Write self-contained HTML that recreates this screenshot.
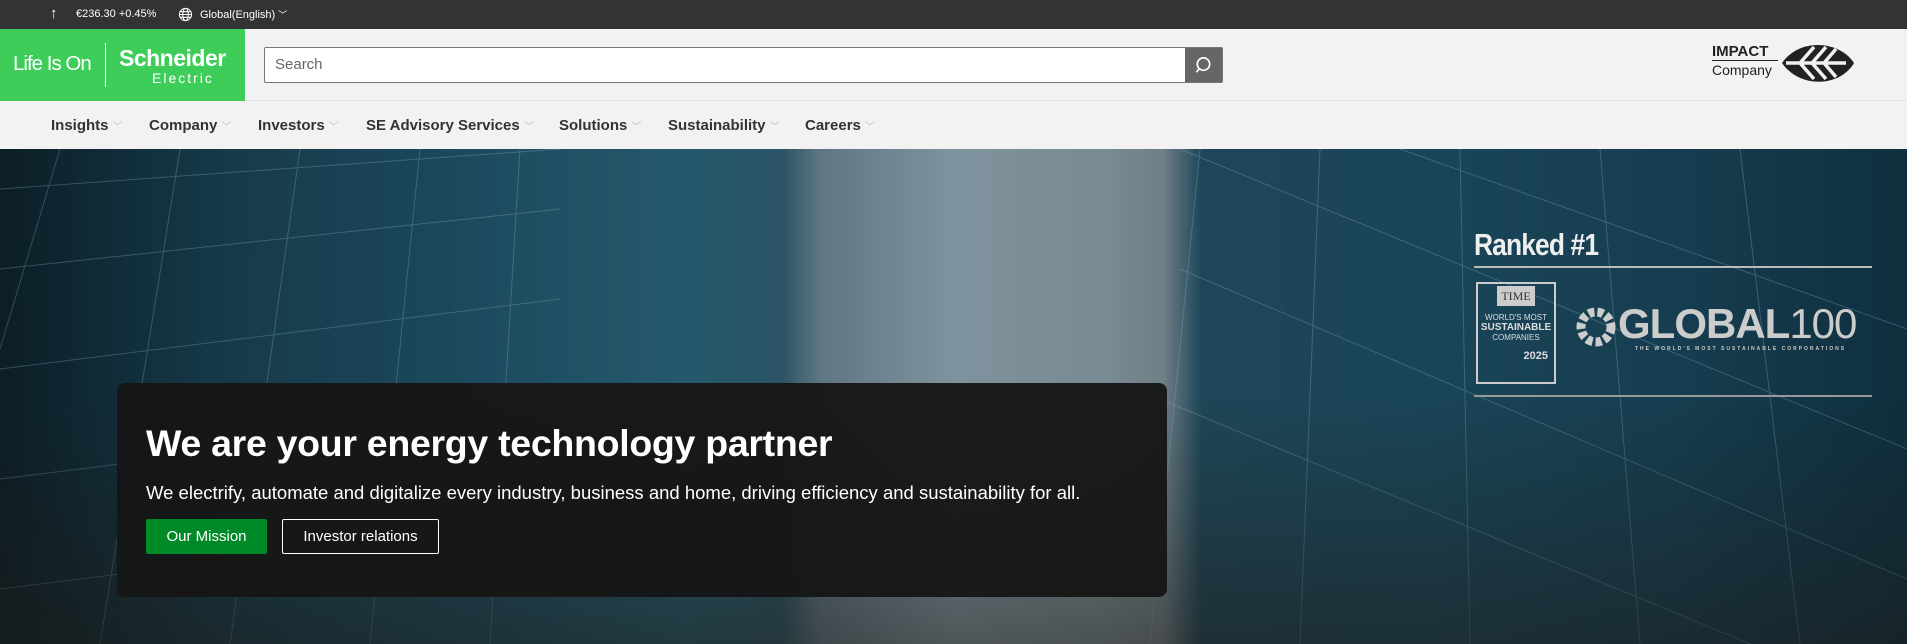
<!DOCTYPE html>
<html><head><meta charset="utf-8"><style>
*{margin:0;padding:0;box-sizing:border-box}
html,body{width:1907px;height:644px;overflow:hidden}
body{font-family:"Liberation Sans",Arial,sans-serif;background:#fff;position:relative}
.top{position:absolute;left:0;top:0;width:1907px;height:29px;background:#333;color:#fff;font-size:11px}
.hdr{position:absolute;left:0;top:29px;width:1907px;height:72px;background:#f2f2f2;border-bottom:1px solid #e2e2e2}
.logo{position:absolute;left:0;top:0;width:245px;height:72px;background:#3dcd58;color:#fff}
.nav{position:absolute;left:0;top:101px;width:1907px;height:48px;background:#f2f2f2}
.nav span{position:absolute;top:16px;font-size:15px;font-weight:bold;color:#333}
.nav span i{font-style:normal;color:#bbb;font-weight:normal;font-size:10px;margin-left:4px}
.hero{position:absolute;left:0;top:149px;width:1907px;height:495px;overflow:hidden;
background:linear-gradient(90deg,#0c1e26 0%,#163a4a 12%,#1d4a5e 25%,#24596b 36%,#2a5466 41%,#5f7682 43%,#7f939e 50%,#788a92 58%,#6f7f86 61%,#1e4658 63%,#1a4558 75%,#163d50 88%,#0f2f3e 100%)}
.hero .shade{position:absolute;inset:0;background:linear-gradient(180deg,rgba(0,0,0,0) 0%,rgba(0,0,0,0) 50%,rgba(30,25,20,.5) 100%)}
.card{position:absolute;left:117px;top:234px;width:1050px;height:214px;background:rgba(22,22,22,.96);border-radius:8px}
</style></head><body>
<div class="top">
 <span style="position:absolute;left:50px;top:5px;font-size:15px">↑</span>
 <span style="position:absolute;left:76px;top:8px">€236.30 +0.45%</span>
 <svg style="position:absolute;left:178px;top:7px" width="15" height="15" viewBox="0 0 16 16" fill="none" stroke="#fff" stroke-width="1.1"><circle cx="8" cy="8" r="6.5"/><ellipse cx="8" cy="8" rx="3" ry="6.5"/><path d="M1.5 8h13M2.5 5h11M2.5 11h11"/></svg>
 <span style="position:absolute;left:200px;top:8px">Global(English) <span style="font-size:9px">﹀</span></span>
</div>
<div class="hdr">
 <div class="logo">
  <span style="position:absolute;left:13px;top:23px;font-size:20.5px;letter-spacing:-1px">Life Is On</span>
  <div style="position:absolute;left:105px;top:14px;width:1px;height:44px;background:#fff"></div>
  <span style="position:absolute;left:119px;top:16px;font-size:23px;font-weight:bold;letter-spacing:-.5px">Schneider</span>
  <span style="position:absolute;left:152px;top:41px;font-size:14px;letter-spacing:2px">Electric</span>
 </div>
 <div style="position:absolute;left:264px;top:18px;width:959px;height:36px;background:#fff;border:1px solid #777;border-radius:2px">
  <span style="position:absolute;left:10px;top:8px;font-size:15px;color:#666">Search</span>
  <div style="position:absolute;right:0;top:0;width:37px;height:34px;background:#666"><svg style="position:absolute;left:9px;top:8px" width="19" height="19" viewBox="0 0 20 20" fill="none" stroke="#fff" stroke-width="1.8"><circle cx="10" cy="8.5" r="6.5"/><path d="M5.5 13.5l-3 3.5"/></svg></div>
 </div>
 <div style="position:absolute;left:1712px;top:14px;font-size:15px;font-weight:bold;color:#222">IMPACT</div>
 <div style="position:absolute;left:1712px;top:31px;width:66px;height:1px;background:#222"></div>
 <div style="position:absolute;left:1712px;top:33px;font-size:14px;color:#222">Company</div>
 <svg style="position:absolute;left:1780px;top:12px" width="76" height="48" viewBox="0 0 76 48"><path d="M2 22 C20 -4 60 0 74 22 C60 46 20 48 2 22Z" fill="#222"/><path d="M6 22H66M20 22l14-16M32 22l14-16M44 22l12-14M20 22l14 16M32 22l14 16M44 22l12 14" stroke="#f2f2f2" stroke-width="3.5" fill="none"/></svg>
</div>
<div class="nav">
 <span style="left:51px">Insights<i>﹀</i></span>
 <span style="left:149px">Company<i>﹀</i></span>
 <span style="left:258px">Investors<i>﹀</i></span>
 <span style="left:366px">SE Advisory Services<i>﹀</i></span>
 <span style="left:559px">Solutions<i>﹀</i></span>
 <span style="left:668px">Sustainability<i>﹀</i></span>
 <span style="left:805px">Careers<i>﹀</i></span>
</div>
<div class="hero">
 <svg width="1907" height="495" style="position:absolute;left:0;top:0;opacity:.3">
  <g stroke="#8fb8c8" stroke-width="1" fill="none">
   <path d="M0 40L560 0M0 120L560 60M0 220L560 150M0 330L560 260M0 440L560 370M60 0L0 200M180 0L100 495M300 0L230 495M420 0L370 495M520 0L490 495"/>
   <path d="M1180 0L1907 300M1180 120L1907 430M1160 250L1907 560M1200 0L1150 495M1320 0L1300 495M1460 0L1470 495M1600 0L1640 495M1740 0L1800 495M1400 0L1907 180"/>
  </g>
 </svg>
 <div class="shade"></div>
 <div class="card">
  <div style="position:absolute;left:29px;top:39px;font-size:37.5px;font-weight:bold;color:#fff;letter-spacing:-.3px">We are your energy technology partner</div>
  <div style="position:absolute;left:29px;top:99px;font-size:18.5px;color:#fff">We electrify, automate and digitalize every industry, business and home, driving efficiency and sustainability for all.</div>
  <div style="position:absolute;left:29px;top:136px;width:121px;height:35px;background:#008a27;border-radius:2px;color:#fff;font-size:15px;text-align:center;line-height:35px">Our Mission</div>
  <div style="position:absolute;left:165px;top:136px;width:157px;height:35px;border:1px solid #fff;border-radius:2px;color:#fff;font-size:15px;text-align:center;line-height:33px">Investor relations</div>
 </div>
 <div style="position:absolute;left:1474px;top:78px;font-size:31px;font-weight:bold;color:#eee;letter-spacing:-1px;transform:scaleX(.85);transform-origin:left">Ranked #1</div>
 <div style="position:absolute;left:1474px;top:117px;width:398px;height:2px;background:#bbb"></div>
 <div style="position:absolute;left:1476px;top:133px;width:80px;height:102px;border:2px solid #ccc;color:#ddd;text-align:center">
  <div style="margin:2px auto 0;width:38px;height:20px;background:#ccc;color:#333;font-family:'Liberation Serif',serif;font-size:12px;line-height:20px">TIME</div>
  <div style="font-size:8px;margin-top:7px">WORLD'S MOST</div>
  <div style="font-size:10px;font-weight:bold">SUSTAINABLE</div>
  <div style="font-size:8px">COMPANIES</div>
  <div style="font-size:11px;font-weight:bold;margin-top:8px;text-align:right;padding-right:6px">2025</div>
 </div>
 <svg style="position:absolute;left:1575px;top:152px" width="42" height="52" viewBox="0 0 42 52"><circle cx="21" cy="26" r="15" fill="none" stroke="#ccc" stroke-width="9" stroke-dasharray="6 3"/></svg>
 <div style="position:absolute;left:1618px;top:151px;font-size:42px;font-weight:bold;color:#ccc;letter-spacing:-1px">GLOBAL<span style="font-weight:normal">100</span></div>
 <div style="position:absolute;left:1635px;top:197px;font-size:5px;color:#ccc;letter-spacing:2px;font-weight:bold">THE WORLD'S MOST SUSTAINABLE CORPORATIONS</div>
 <div style="position:absolute;left:1474px;top:246px;width:398px;height:2px;background:#999"></div>
</div>
</body></html>
